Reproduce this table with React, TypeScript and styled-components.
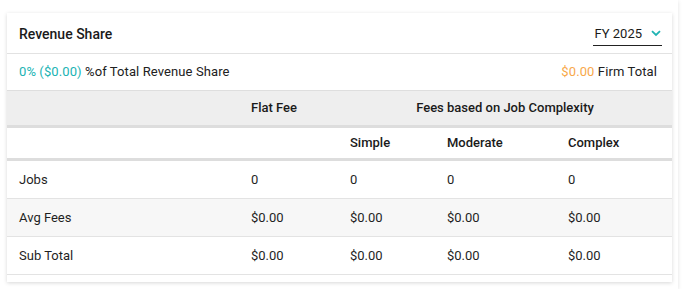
import React from "react";
import styled, { createGlobalStyle } from "styled-components";

const Global = createGlobalStyle`
  html, body { margin: 0; padding: 0; background: #ffffff; }
  body { font-family: Roboto, "Noto Sans", Arial, sans-serif; color: #212121; }
`;

const Outer = styled.div`
  width: 678px;
  height: 289px;
  box-sizing: border-box;
  padding: 13px 6px 0 7px;
  box-shadow: 0 1px 4px rgba(0, 0, 0, 0.12);
  background: #fff;
`;

const Card = styled.div`
  width: 665px;
  background: #fff;
  box-shadow: 0 1px 4px rgba(0, 0, 0, 0.16);
  padding-bottom: 7px;
`;

const Header = styled.div`
  display: flex;
  align-items: center;
  justify-content: space-between;
  height: 40px;
  padding: 0 10px 0 12px;
  border-bottom: 1px solid #e2e2e2;
`;

const Title = styled.h2`
  margin: 2px 0 0;
  font-size: 14px;
  font-weight: 500;
  color: #1a1a1a;
`;

const Select = styled.div`
  display: flex;
  align-items: center;
  gap: 9px;
  height: 22px;
  padding: 0 1px 0 2px;
  border-bottom: 1.5px solid #222;
  margin-top: 2px;
  font-size: 13px;
  color: #1a1a1a;
`;

const Summary = styled.div`
  display: flex;
  align-items: center;
  justify-content: space-between;
  height: 34px;
  padding: 0 15px 2px 12px;
  border-bottom: 1px solid #dedede;
  font-size: 13px;
  letter-spacing: 0.1px;
`;

const Accent = styled.span<{ $tone: "teal" | "orange" }>`
  color: ${(p) => (p.$tone === "teal" ? "#20b3b3" : "#f8a84a")};
`;

const Table = styled.table`
  width: 665px;
  border-collapse: collapse;
  table-layout: fixed;
  font-size: 13px;
`;

const HeadRow = styled.tr<{ $shade?: boolean }>`
  background: ${(p) => (p.$shade ? "#eeeeee" : "#ffffff")};
  border-bottom: 3px solid #dddddd;
`;

const Th = styled.th<{ $center?: boolean; $h: number }>`
  height: ${(p) => p.$h}px;
  padding: 0 12px;
  text-align: ${(p) => (p.$center ? "center" : "left")};
  font-weight: 500;
  color: #1a1a1a;
  box-sizing: border-box;
`;

const BodyRow = styled.tr<{ $shade?: boolean }>`
  background: ${(p) => (p.$shade ? "#f7f7f7" : "#ffffff")};
  border-bottom: 1px solid #e3e3e3;
`;

const Td = styled.td`
  height: 37px;
  padding: 0 12px;
  color: #1f1f1f;
`;

const Chevron = () => (
  <svg width="10" height="7" viewBox="0 0 10 7" fill="none">
    <path d="M1 1.2 L5 5 L9 1.2" stroke="#20b3b3" strokeWidth="1.8" />
  </svg>
);

const rows = [
  { label: "Jobs", values: ["0", "0", "0", "0"] },
  { label: "Avg Fees", values: ["$0.00", "$0.00", "$0.00", "$0.00"] },
  { label: "Sub Total", values: ["$0.00", "$0.00", "$0.00", "$0.00"] },
];

export default function App() {
  return (
    <>
      <Global />
      <Outer>
        <Card>
          <Header>
            <Title>Revenue Share</Title>
            <Select>
              <span>FY 2025</span>
              <Chevron />
            </Select>
          </Header>
          <Summary>
            <span>
              <Accent $tone="teal">0% ($0.00)</Accent> %of Total Revenue Share
            </span>
            <span>
              <Accent $tone="orange">$0.00</Accent> Firm Total
            </span>
          </Summary>
          <Table>
            <colgroup>
              <col style={{ width: 232 }} />
              <col style={{ width: 99 }} />
              <col style={{ width: 97 }} />
              <col style={{ width: 121 }} />
              <col style={{ width: 116 }} />
            </colgroup>
            <thead>
              <HeadRow $shade>
                <Th $h={35}></Th>
                <Th $h={35}>Flat Fee</Th>
                <Th $h={35} $center colSpan={3}>
                  Fees based on Job Complexity
                </Th>
              </HeadRow>
              <HeadRow>
                <Th $h={33}></Th>
                <Th $h={33}></Th>
                <Th $h={33}>Simple</Th>
                <Th $h={33}>Moderate</Th>
                <Th $h={33}>Complex</Th>
              </HeadRow>
            </thead>
            <tbody>
              {rows.map((r, i) => (
                <BodyRow key={r.label} $shade={i === 1}>
                  <Td>{r.label}</Td>
                  {r.values.map((v, j) => (
                    <Td key={j}>{v}</Td>
                  ))}
                </BodyRow>
              ))}
            </tbody>
          </Table>
        </Card>
      </Outer>
    </>
  );
}
